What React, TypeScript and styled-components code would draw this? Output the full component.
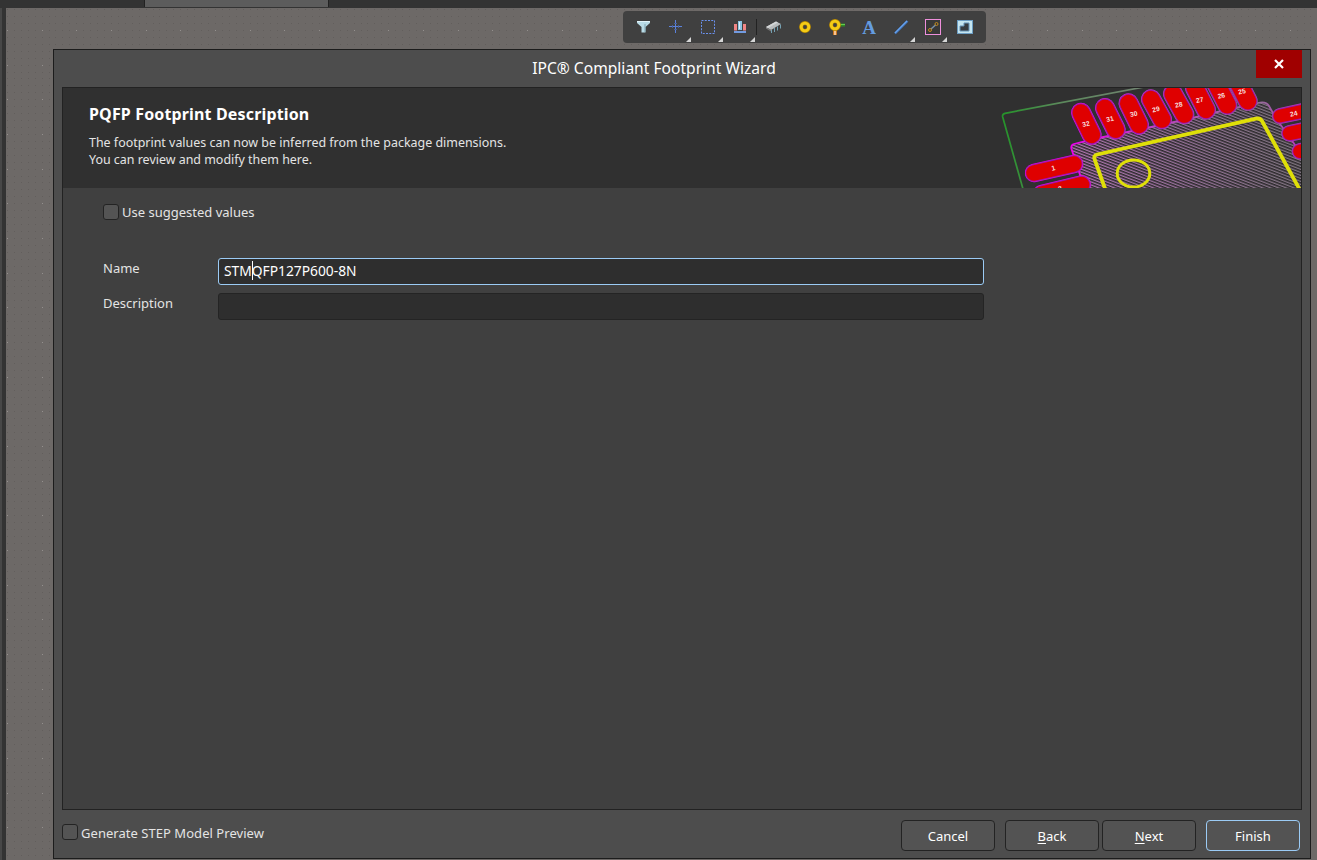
import React from "react";
import styled, { createGlobalStyle } from "styled-components";

const GlobalStyle = createGlobalStyle`
  * { box-sizing: border-box; }
  body { margin: 0; background: #333; overflow: hidden; }
`;

const Screen = styled.div`
  width: 1317px;
  height: 860px;
  display: flex;
  flex-direction: column;
  overflow: hidden;
  background: #333333;
  color: #e4e4e4;
  font-family: "Noto Sans", "Open Sans", sans-serif;
  font-size: 13px;
`;

const TabStrip = styled.div`
  height: 8px;
  flex: none;
  display: flex;
  padding-left: 144px;
`;

const ActiveTab = styled.div`
  width: 185px;
  height: 7px;
  background: #5c5c5c;
  border: solid #222;
  border-width: 0 1px;
`;

const Workspace = styled.div`
  flex: 1;
  display: flex;
  min-height: 0;
`;

const Gutter = styled.div`
  width: 6px;
  flex: none;
  background: #333333;
  border-left: 2px solid #474747;
`;

const Canvas = styled.div`
  position: relative;
  flex: 1;
  min-width: 0;
  background: #6d6967;
  padding: 3px 0 0 47px;
`;

const Dots = styled.svg`
  position: absolute;
  inset: 0;
`;

const Toolbar = styled.div`
  position: relative;
  width: 363px;
  height: 32px;
  margin-left: 570px;
  padding-left: 5px;
  display: flex;
  background: #404040;
  border-radius: 4px;
`;

const ToolIcon = styled.svg`
  width: 32px;
  height: 32px;
  flex: none;
  overflow: visible;
`;

const Dialog = styled.div`
  position: relative;
  width: 1258px;
  height: 810px;
  margin-top: 6px;
  padding: 0 8px;
  display: flex;
  flex-direction: column;
  background: #4d4d4d;
  border: 1px solid #1c1c1c;
`;

const TitleBar = styled.div`
  height: 37px;
  flex: none;
  display: flex;
  justify-content: space-between;
`;

const Title = styled.div`
  width: 1184px;
  text-align: center;
  font-size: 15.600px;
  line-height: 37px;
  color: #fff;
`;

const CloseButton = styled.button`
  width: 46px;
  height: 28px;
  padding: 0 1px 1px 0;
  border: 0;
  display: grid;
  place-items: center;
  background: #a00000;
`;

const Panel = styled.div`
  width: 1240px;
  height: 723px;
  flex: none;
  background: #404040;
  border: 1px solid #222;
`;

const Banner = styled.div`
  height: 100px;
  display: flex;
  justify-content: space-between;
  background: #303030;
`;

const BannerText = styled.div`
  padding: 14px 0 0 26px;
`;

const Heading = styled.h1`
  margin: 0 0 8px;
  font-size: 16px;
  line-height: 24px;
  font-weight: 700;
  letter-spacing: 0.150px;
  color: #fff;
`;

const Line = styled.div`
  height: 17px;
  line-height: 17px;
  font-size: 12.450px;
  white-space: nowrap;
`;

const Form = styled.div`
  padding: 15px 0 0 40px;
`;

const CheckLabel = styled.label`
  display: flex;
  align-items: center;
  gap: 3px;
  height: 18px;
`;

const CheckBox = styled.span`
  width: 16px;
  height: 16px;
  background: #545454;
  border: 1px solid #232323;
  border-radius: 3px;
`;

const Field = styled.label<{ $top: number }>`
  display: flex;
  height: 27px;
  margin-top: ${(p) => p.$top}px;
`;

const FieldLabel = styled.span`
  width: 115px;
  line-height: 20px;
`;

const TextBox = styled.span<{ $focus?: boolean }>`
  width: 766px;
  height: 27px;
  padding: 0 0 2px 5px;
  display: flex;
  align-items: center;
  font-size: 13.800px;
  color: #fff;
  background: #2e2e2e;
  border: 1px solid ${(p) => (p.$focus ? "#9bcbf5" : "#242424")};
  border-radius: 3px;
`;

const Caret = styled.span`
  width: 1px;
  height: 19px;
  margin-right: -1px;
  background: #fff;
`;

const Footer = styled.div`
  flex: 1;
  display: flex;
  justify-content: space-between;
  padding: 10px 2px 0 0;
`;

const FooterCheck = styled(CheckLabel)`
  margin-top: 3px;
  line-height: 18px;
  & > em { font-style: normal; padding-top: 2px; letter-spacing: 0.040px; }
`;

const Buttons = styled.div`
  display: flex;
`;

const Button = styled.button<{ $gap?: number; $primary?: boolean }>`
  width: 94px;
  height: 31px;
  margin: 0 0 0 ${(p) => p.$gap ?? 0}px;
  padding: 1px 0 0;
  font: inherit;
  color: #fff;
  background: #535353;
  border: 1px solid ${(p) => (p.$primary ? "#9bcbf5" : "#232323")};
  border-radius: 4px;
  u { text-underline-offset: 2px; }
`;

const GRID = 34.67;

function dotPath(step: number, top: number) {
  let d = "";
  for (let y = top; y < 852; y += step) {
    for (let x = 1.4; x < 1311; x += step) {
      if (y < 42 || x < 47 || x > 1304) d += `M${Math.floor(x)} ${Math.floor(y)}h1v1h-1z`;
    }
  }
  return d;
}

const GridDots = () => (
  <Dots width="1311" height="852">
    <path d={dotPath(GRID / 5, 22.4 - (GRID / 5) * 3)} fill="#625e5c" />
    <path d={dotPath(GRID, 22.4)} fill="#94908e" />
  </Dots>
);

const More = () => <path d="M31 26v5h-5z" fill="#d6d6d6" />;

const Tools = () => (
  <Toolbar>
    <ToolIcon>
      <path d="M9 10h13v2l-4.500 4v5.500h-4V16L9 12z" fill="#b9dbe6" />
      <path d="M9 10.500h13" stroke="#e2f4fa" />
      <path d="M17 13v8" stroke="#7fa3b2" />
    </ToolIcon>
    <ToolIcon>
      <path d="M9 15.500h13M15.500 9v13" stroke="#5b82dc" />
      <path d="M12.500 14v3M18.500 14v3M14 12.500h3M14 18.500h3" stroke="#49609a" />
      <More />
    </ToolIcon>
    <ToolIcon>
      <rect x="9.500" y="9.500" width="13" height="13" fill="none" stroke="#6a91ee" strokeDasharray="2 1.250" />
      <More />
    </ToolIcon>
    <ToolIcon>
      <path d="M10 13h3v6.500h-3zM19 13h3v6.500h-3z" fill="#f08585" />
      <path d="M14 10h4v9h-4z" fill="#8cc4e2" />
      <path d="M15.500 11v7" stroke="#d9f2fb" />
      <path d="M10 21h12" stroke="#729be0" strokeWidth="2" />
      <path d="M32 8h1v16h-1z" fill="#222" />
      <More />
    </ToolIcon>
    <ToolIcon>
      <path d="M10 16L20 10.500l5 2.500-10 6z" fill="#b9bcbd" />
      <path d="M10 16l5 3v1.500l-5-3z" fill="#777" />
      <path d="M10 16L20 10.500l2 1L12 17z" fill="#d4d6d7" />
      <path d="M15.500 19v3M18.500 17v4M21.500 15.500v4M24.500 13.500v4" stroke="#75a0b1" />
    </ToolIcon>
    <ToolIcon>
      <circle cx="17" cy="16" r="3.900" fill="none" stroke="#b88900" strokeWidth="4" />
      <circle cx="17" cy="16" r="3.800" fill="none" stroke="#f4cc16" strokeWidth="2.800" />
    </ToolIcon>
    <ToolIcon>
      <path d="M20 14h5" stroke="#2f8a28" strokeWidth="3" />
      <path d="M20 13.500h5" stroke="#67c84f" />
      <path d="M15 19v5" stroke="#c97622" strokeWidth="4" />
      <path d="M15 19v5" stroke="#f6c391" strokeWidth="2" />
      <circle cx="15" cy="14" r="3.900" fill="none" stroke="#b88900" strokeWidth="4" />
      <circle cx="15" cy="14" r="3.800" fill="none" stroke="#f4cc16" strokeWidth="2.800" />
    </ToolIcon>
    <ToolIcon>
      <text x="17" y="23" textAnchor="middle" fill="#649ce0" fontFamily="Liberation Serif, serif" fontWeight="700" fontSize="19">A</text>
    </ToolIcon>
    <ToolIcon>
      <path d="M11 22.500L23.500 10" stroke="#3e72b8" strokeWidth="2.400" />
      <path d="M11 22L23 10" stroke="#69a2ea" strokeWidth="1.300" />
      <More />
    </ToolIcon>
    <ToolIcon>
      <rect x="9.500" y="8.500" width="15" height="15" fill="#383838" stroke="#ee8fdb" />
      <path d="M15 18l4.500-4" stroke="#7890a8" strokeWidth="1.500" />
      <circle cx="14" cy="19" r="1.500" fill="none" stroke="#c28a1e" />
      <circle cx="20.500" cy="13" r="1.500" fill="none" stroke="#c28a1e" />
      <More />
    </ToolIcon>
    <ToolIcon>
      <rect x="9.500" y="9.500" width="15" height="13" fill="#c5e6f1" stroke="#6d9ec4" />
      <path d="M16 12h5v8h-9v-5h4z" fill="#383d41" stroke="#6491b5" />
    </ToolIcon>
  </Toolbar>
);

type Pad = { n: number; a: [number, number]; b: [number, number]; t?: [number, number]; w?: number };

const pads: Pad[] = [
  { n: 32, a: [80, 24.7], b: [90.7, 46.7], t: [85, 36] },
  { n: 31, a: [104, 20], b: [114.7, 41.5], t: [109, 31] },
  { n: 30, a: [127.5, 15.3], b: [138, 36.7], t: [132.7, 26] },
  { n: 29, a: [150, 11.3], b: [161, 31.3], t: [155, 21.3] },
  { n: 28, a: [172, 6], b: [183.3, 26.3], t: [177.7, 16.7] },
  { n: 27, a: [194, 0], b: [205, 21.7], t: [198.7, 12] },
  { n: 26, a: [215, -5], b: [226.3, 17], t: [220.3, 7.7] },
  { n: 25, a: [235.5, -9], b: [246.7, 13], t: [241, 3.5] },
  { n: 1, a: [33, 85], b: [73, 76], t: [52.3, 80], w: 15.5 },
  { n: 2, a: [41, 106], b: [80.7, 96.5], t: [59, 100.5], w: 15.5 },
  { n: 24, a: [279, 28], b: [312, 21], t: [292.7, 25.7], w: 13 },
  { n: 23, a: [288.5, 45.3], b: [320, 39], w: 13.5 },
  { n: 22, a: [299, 63.3], b: [330, 57], w: 13.5 },
];

const FootprintArt = () => (
  <svg width="300" height="100" viewBox="0 0 300 100">
    <defs>
      <linearGradient id="ink" gradientUnits="userSpaceOnUse" x1="70" y1="90" x2="280" y2="30">
        <stop offset="0" stopColor="#b377b3" />
        <stop offset=".5" stopColor="#97719a" />
        <stop offset="1" stopColor="#807580" />
      </linearGradient>
      <pattern id="gaps" width="8" height="2.800" patternUnits="userSpaceOnUse" patternTransform="rotate(21)">
        <rect width="8" height="1.500" fill="#2b292b" />
      </pattern>
      <linearGradient id="board" x1="0" x2="1">
        <stop offset="0" stopColor="#25942a" />
        <stop offset=".4" stopColor="#5b8a5b" />
        <stop offset="1" stopColor="#718471" />
      </linearGradient>
      <linearGradient id="edge" gradientUnits="userSpaceOnUse" x1="70" y1="0" x2="290" y2="0">
        <stop offset="0" stopColor="#ec00ec" />
        <stop offset=".35" stopColor="#c33fc5" />
        <stop offset=".85" stopColor="#956f98" />
        <stop offset="1" stopColor="#b23fb5" />
      </linearGradient>
      <path id="court" d="M86 108L70.500 61Q69.500 57 73 56L93 51 117 46 141 41 164 36 187 31 208 26 229 21 249 17 257 15Q265 13 268 18L272 25 279 36 290 51 300 66 320 108Z" />
    </defs>
    <path d="M22 101L1.700 29Q1 26 4 25.300L142-.800" fill="none" stroke="url(#board)" strokeWidth="1.700" />
    <use href="#court" fill="url(#ink)" />
    <use href="#court" fill="url(#gaps)" stroke="url(#edge)" strokeWidth="1.800" />
    {pads.map((p) => (
      <g key={p.n} strokeLinecap="round">
        <path d={`M${p.a}L${p.b}`} stroke="url(#edge)" strokeWidth={(p.w ?? 17) + 3} />
        <path d={`M${p.a}L${p.b}`} stroke="#9d18ad" strokeWidth={(p.w ?? 17) + 2} />
        <path d={`M${p.a}L${p.b}`} stroke="#df0000" strokeWidth={p.w ?? 17} />
        {p.t && (
          <text
            x={p.t[0]}
            y={p.t[1] + 2.3}
            textAnchor="middle"
            transform={`rotate(-13 ${p.t})`}
            fill="#f6dede"
            fontFamily="Liberation Sans, sans-serif"
            fontWeight="700"
            fontSize="6.800"
          >
            {p.n}
          </text>
        )}
      </g>
    ))}
    <path d="M104.500 102L93.500 71Q92.500 67.500 96 66.500L255 30.700Q259 29.700 261 33L299 102" fill="none" stroke="#dfdf08" strokeWidth="3.800" />
    <ellipse cx="132.500" cy="85.500" rx="16.300" ry="13.500" fill="none" stroke="#dfdf08" strokeWidth="3" />
  </svg>
);

export default function App() {
  return (
    <Screen>
      <GlobalStyle />
      <TabStrip>
        <ActiveTab />
      </TabStrip>
      <Workspace>
        <Gutter />
        <Canvas>
          <GridDots />
          <Tools />
          <Dialog>
            <TitleBar>
              <Title>IPC® Compliant Footprint Wizard</Title>
              <CloseButton aria-label="Close">
                <svg width="10" height="10">
                  <path d="M1 1l8 8M9 1L1 9" stroke="#fff" strokeWidth="2.200" />
                </svg>
              </CloseButton>
            </TitleBar>
            <Panel>
              <Banner>
                <BannerText>
                  <Heading>PQFP Footprint Description</Heading>
                  <Line>The footprint values can now be inferred from the package dimensions.</Line>
                  <Line>You can review and modify them here.</Line>
                </BannerText>
                <FootprintArt />
              </Banner>
              <Form>
                <CheckLabel>
                  <CheckBox />
                  Use suggested values
                </CheckLabel>
                <Field $top={37}>
                  <FieldLabel>Name</FieldLabel>
                  <TextBox $focus>
                    STM
                    <Caret />
                    QFP127P600-8N
                  </TextBox>
                </Field>
                <Field $top={8}>
                  <FieldLabel>Description</FieldLabel>
                  <TextBox />
                </Field>
              </Form>
            </Panel>
            <Footer>
              <FooterCheck>
                <CheckBox />
                <em>Generate STEP Model Preview</em>
              </FooterCheck>
              <Buttons>
                <Button>Cancel</Button>
                <Button $gap={10}>
                  <u>B</u>ack
                </Button>
                <Button $gap={3}>
                  <u>N</u>ext
                </Button>
                <Button $gap={10} $primary>
                  Finish
                </Button>
              </Buttons>
            </Footer>
          </Dialog>
        </Canvas>
      </Workspace>
    </Screen>
  );
}
